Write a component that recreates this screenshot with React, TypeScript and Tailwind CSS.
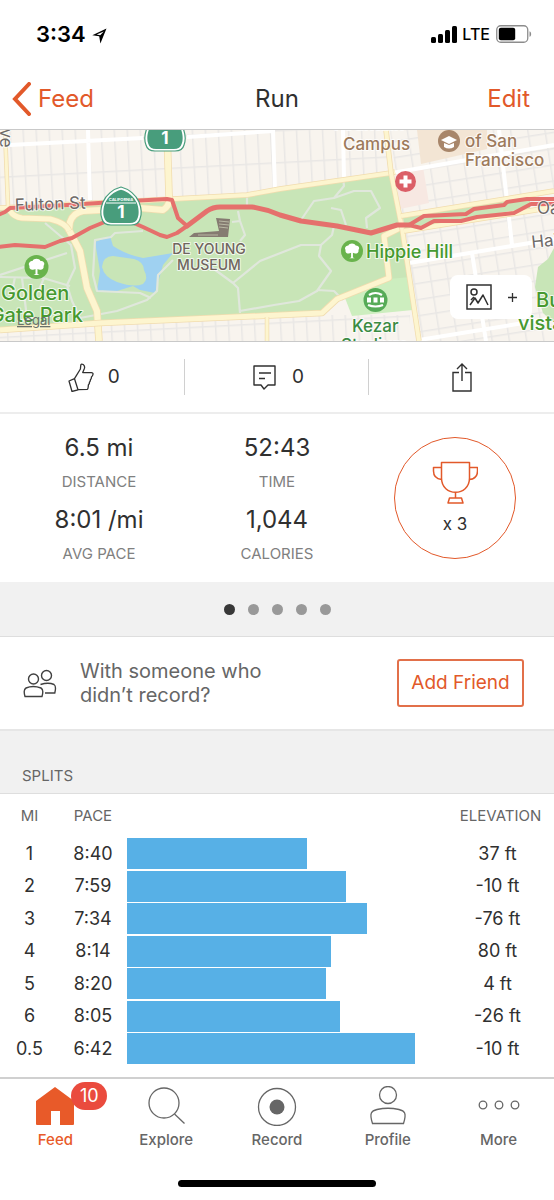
import type { ReactNode } from "react";

const STATS = [
  { value: "6.5 mi", label: "DISTANCE" },
  { value: "52:43", label: "TIME" },
  { value: "8:01 /mi", label: "AVG PACE" },
  { value: "1,044", label: "CALORIES" },
];

const SPLITS = [
  { mi: "1", pace: "8:40", elevation: "37 ft", bar: 62.5 },
  { mi: "2", pace: "7:59", elevation: "-10 ft", bar: 76 },
  { mi: "3", pace: "7:34", elevation: "-76 ft", bar: 83.5 },
  { mi: "4", pace: "8:14", elevation: "80 ft", bar: 70.8 },
  { mi: "5", pace: "8:20", elevation: "4 ft", bar: 69.2 },
  { mi: "6", pace: "8:05", elevation: "-26 ft", bar: 74 },
  { mi: "0.5", pace: "6:42", elevation: "-10 ft", bar: 100 },
];

function StatusBar() {
  return (
    <div className="flex h-[68px] items-center justify-between pl-9 pr-[22px] text-black">
      <div className="flex items-center gap-[6px]">
        <span className="text-[22px] font-semibold leading-7">3:34</span>
        <svg width="15" height="16" viewBox="0 0 15 16" className="mt-1" aria-hidden="true">
          <path d="M14.5.5 8.4 15.5 7.2 8.2.3 7.2Z" />
          <path d="M11.8 3.4 4.6 6.6l3.6.6Z" fill="white" />
        </svg>
      </div>
      <div className="flex items-center gap-[5px]">
        <svg width="26" height="17" viewBox="0 0 26 17" aria-hidden="true">
          <rect x="0" y="11" width="5" height="6" rx="1.5" />
          <rect x="7" y="8" width="5" height="9" rx="1.5" />
          <rect x="14" y="4" width="5" height="13" rx="1.5" />
          <rect x="21" y="0" width="5" height="17" rx="1.5" />
        </svg>
        <span className="text-[16px] font-medium leading-6">LTE</span>
        <svg width="36" height="18" viewBox="0 0 36 18" className="ml-px" aria-hidden="true">
          <rect x=".75" y=".75" width="31" height="16.5" rx="4" fill="none" stroke="#8c8c8c" strokeWidth="1.3" />
          <rect x="2.8" y="2.8" width="16.4" height="12.4" rx="2" />
          <path d="M33.5 6.2c2.2.8 2.2 4.8 0 5.6Z" fill="#8c8c8c" />
        </svg>
      </div>
    </div>
  );
}

function NavBar() {
  return (
    <header className="grid h-[62px] grid-cols-3 items-center border-b border-[#c9c9c9] pl-3 pr-6 text-[24px] leading-7">
      <a href="#feed" className="flex items-center gap-[7px] text-[#e2592a]">
        <svg width="19" height="34" viewBox="0 0 19 34" fill="none" stroke="currentColor" strokeWidth="4" aria-hidden="true">
          <path d="M17 2 3 17l14 15" strokeLinecap="round" />
        </svg>
        Feed
      </a>
      <h1 className="pl-3 text-center text-[#303030]">Run</h1>
      <button type="button" className="justify-self-end text-[#e2592a]">
        Edit
      </button>
    </header>
  );
}

function Road({ d, width = 5 }: { d: string; width?: number }) {
  return (
    <g fill="none" strokeLinejoin="round">
      <path d={d} stroke="#f1dcae" strokeWidth={width + 1.5} />
      <path d={d} stroke="#fdf5cf" strokeWidth={width} />
    </g>
  );
}

function Shield({ x, y }: { x: number; y: number }) {
  const d = "M0-22C8-20 15-14 18-7c2 5 3 12 1 17-1 4-4 6-9 6h-20c-5 0-8-2-9-6-2-5-1-12 1-17 3-7 10-13 18-15Z";
  return (
    <g transform={`translate(${x} ${y})`}>
      <path d={d} fill="#fff" stroke="#489d7c" strokeWidth="1.2" />
      <path d={d} transform="scale(.88)" fill="#489d7c" />
      <path d="M-15-6h30" stroke="#fff" strokeWidth="1" />
      <text y="-8" textAnchor="middle" fontSize="4" fontWeight="700" fill="#fff">
        CALIFORNIA
      </text>
      <text y="9" textAnchor="middle" fontSize="17" fontWeight="700" fill="#fff">
        1
      </text>
    </g>
  );
}

function TreePin({ x, y, r }: { x: number; y: number; r: number }) {
  return (
    <g transform={`translate(${x} ${y}) scale(${r / 12})`}>
      <circle r="12" fill="#69b34c" />
      <path
        d="M-1 7V2c-3 2-7 0-6-3-2-3 1-5 3-5 1-3 7-3 8 0 3 0 5 2 3 5 1 3-3 5-6 3v5l2 1h-6Z"
        fill="#fff"
      />
    </g>
  );
}

function RouteMap() {
  return (
    <div className="relative overflow-hidden border-b border-[#c9c9c9]">
      <svg viewBox="0 0 554 211" className="block w-full" role="img" aria-label="Route map through Golden Gate Park">
        <defs>
          <pattern id="avenues" width="13" height="32" patternUnits="userSpaceOnUse" patternTransform="translate(10 14) rotate(-3)">
            <path d="M0 0v32M0 0h13" stroke="#e9e7e5" strokeWidth="3" />
          </pattern>
          <pattern id="blocks" width="17" height="16" patternUnits="userSpaceOnUse" patternTransform="translate(406 106) rotate(-9)">
            <path d="M0 0v16M0 0h17" stroke="#e9e7e5" strokeWidth="3" />
          </pattern>
        </defs>

        <rect width="554" height="211" fill="#f8f4ee" />
        <path d="M0 0h390v50L170 70 0 80ZM0 200l330-15 80 0v26H0Z" fill="url(#avenues)" />
        <path d="M390 0h164v211H418Z" fill="url(#blocks)" />
        <path d="M417 0h70v19l-66 15Z" fill="#f3e5d4" />
        <path d="m395 42 28-5 6 36-29 6Z" fill="#f7e8e2" />

        {/* white streets */}
        <path
          fill="none"
          stroke="#fff"
          strokeWidth="4"
          d="M10 15 143 8M187 7 273 1M88 0l2 70M273 0l2 60M343 0l1 48M392 43 554 15M499 0l13 115M409 133l145-24M472 123l14 88M419 210l135-22"
        />

        {/* parks */}
        <path d="M0 77 173 69 247 64 280 59 391 43 402 98 411 148 389 150 337 171 322 184 280 186 100 194 0 202Z" fill="#c8e5b7" />
        <path d="M389 149 410 147 413 180 352 186 345 168Z" fill="#cdeebf" />
        <path d="M403 88 530 66v12L405 99Z" fill="#c8e5b7" />
        <path d="m554 118-6 11-10 8-3 20 8 26 11 10Z" fill="#c8e5b7" />

        {/* lake */}
        <path
          d="M95 112Q103 109 110 106L113 116Q127 125 143 128L173 123 163 135 155 163 140 160 133 156 117 161H97L100 141Z"
          fill="#9fd1f1"
        />
        <path d="M102 137Q103 126 113 126L134 129Q144 132 144 140 149 149 143 154 134 158 117 152 104 147 102 137Z" fill="#c8e5b7" />

        {/* foot paths */}
        <g fill="none" stroke="#e0e7dc" strokeWidth="2.2" strokeLinejoin="round">
          <path d="M143 101 115 103 111 107 95 110 93 145 97 161 140 163 151 168M173 130 158 145 157 161 147 170 117 181 80 188 72 171 67 155 75 138 71 115 45 93" />
          <path d="M0 145 67 123M0 147 43 148 70 156M15 147l-4 20M22 148l5 40M44 148l-6 14" />
          <path d="M203 131 233 153 238 158 240 183M233 153 260 131 301 115H321L319 126 331 141 317 161 299 171 274 175 240 181M321 115 332 105 334 96M317 160 334 161 343 170" />
          <path d="M301 90 314 71 334 68 344 56 343 48M334 68 354 61 371 61 380 78 366 88 367 98M331 78 341 80 346 95" />
          <path d="M247 66V78M238 81 240 91 245 105 240 111M232 92 240 91" />
        </g>

        <Road d="M0 78 173 69 247 65 280 59 391 43 395 42" width={4} />
        <Road d="M167 0 169 65Q171 75 163 80L140 78 83 81Q73 83 70 92L69 100 80 121 87 158 97 181 99 211" width={6} />
        <Road d="M10 81Q14 87 22 88L50 89Q66 93 69 101" width={5} />
        <Road d="M0 200 100 193 280 185 322 183 337 169 389 148 384 106 402 97" width={5} />
        <Road d="M5 0 8 76M267 187V211" width={3} />
        <Road d="M386 0 391 43 402 98 419 211" width={4} />
        <Road d="M401 86 554 61M404 101 554 77" width={4} />

        {/* recorded route */}
        <g fill="none" stroke="#e5706c" strokeLinejoin="round" strokeLinecap="round">
          <path
            strokeWidth="4"
            d="M-2 85 5 82 10 78 67 75 130 71 167 69 172 70 178 88 187 96M-2 117 15 115 45 117 60 111 72 108 90 98 107 91 127 90 143 97 160 105 167 107 177 103 187 96M409 95 424 86 466 84 474 79 504 75 507 72 527 69 556 69M409 95 421 98 434 91 461 91 477 87 514 83 531 74 556 74"
          />
          <path strokeWidth="5" d="M187 96 207 81Q213 77 220 77L252 77Q266 79 280 85L301 91 337 96 371 103 397 95 409 95" />
        </g>

        {/* museum */}
        <path d="M216 88 230 89 228 107H189L194 103 219 101Z" fill="#857b71" />
        <path d="M219 91 229 92M219 94 229 95M219 97 228 98M198 105h20" stroke="#b9b8a4" strokeWidth="1" />

        <Shield x={165} y={5} />
        <Shield x={121} y={79} />
        <TreePin x={36.5} y={137} r={12} />
        <TreePin x={352} y={121} r={11} />

        {/* stadium */}
        <circle cx="375.5" cy="170" r="12" fill="#56ab57" />
        <path d="M369 165q6.500-4 13 0M368 175q7.500 3 15 0" fill="none" stroke="#fff" strokeWidth="2.200" />
        <path d="M367 167.500h4v5h-4ZM373.500 167.500h4v5h-4ZM380 167.500h4v5h-4Z" fill="#fff" />

        {/* hospital */}
        <circle cx="405.5" cy="51.5" r="10.5" fill="#db5f67" />
        <path d="M405.5 45.5v12M399.5 51.5h12" stroke="#fff" strokeWidth="4" />

        {/* university */}
        <circle cx="449" cy="11" r="11" fill="#a8866a" />
        <path d="m441 10 8-4 8 4-8 4ZM444 13v4q5 3 10 0v-4l-5 2Z" fill="#fff" />

        <g fontWeight="500" stroke="#fff" strokeOpacity=".75" strokeWidth="2" paintOrder="stroke" strokeLinejoin="round">
          <g fill="#9d7a5c" fontSize="17">
            <text x="334" y="0">Fountain</text>
            <text x="343" y="20">Campus</text>
            <text x="465" y="17">of San</text>
            <text x="465" y="36">Francisco</text>
          </g>
          <g fill="#46992f">
            <text x="366" y="128" fontSize="18">Hippie Hill</text>
            <text x="536" y="177" fontSize="20">Buena</text>
            <text x="518" y="200" fontSize="20">vista</text>
            <text x="1" y="170" fontSize="20">Golden</text>
            <text x="83" y="192" fontSize="20" textAnchor="end">Gate Park</text>
          </g>
          <g fill="#3a8b43" fontSize="17">
            <text x="352" y="202">Kezar</text>
            <text x="341" y="221">Stadium</text>
          </g>
          <g fill="#6f665e" fontSize="14" textAnchor="middle">
            <text x="209" y="124">DE YOUNG</text>
            <text x="209" y="140">MUSEUM</text>
          </g>
          <g fill="#6e6a68" fontSize="17" fontWeight="400">
            <text x="15" y="81" transform="rotate(-2 15 81)">Fulton St</text>
            <text x="537" y="84">Oak</text>
            <text x="532" y="118" transform="rotate(-6 532 118)">Haight</text>
            <text transform="translate(0 -12) rotate(90)">Ave</text>
          </g>
        </g>
        <a href="#legal">
          <text x="17" y="195" fontSize="13" fill="#6a716a" textDecoration="underline">
            Legal
          </text>
        </a>
      </svg>

      <button
        type="button"
        aria-label="Add photo"
        className="absolute bottom-[22px] right-[22px] flex h-11 w-[82px] items-center justify-center gap-4 rounded-lg bg-white text-[#303030]"
      >
        <svg width="26" height="26" viewBox="0 0 26 26" fill="none" stroke="currentColor" strokeWidth="1.5" aria-hidden="true">
          <rect x="1" y="1" width="24" height="24" />
          <circle cx="8" cy="8" r="3" />
          <path d="m4 21 5-7 3 5 5-8 5 10M5 16l3-3" strokeLinejoin="round" />
        </svg>
        <svg width="9" height="9" viewBox="0 0 9 9" stroke="currentColor" strokeWidth="1.3" aria-hidden="true">
          <path d="M4.5 0v9M0 4.5h9" />
        </svg>
      </button>
    </div>
  );
}

function ActionBar() {
  return (
    <div className="grid h-[72px] grid-cols-3 items-center border-b-2 border-[#ededed] text-[19px] text-[#303030]">
      <button type="button" aria-label="Give kudos, 0" className="flex h-9 items-center justify-center gap-[14px] border-r border-[#d0d0d0] pl-1">
        <svg width="26" height="29" viewBox="0 0 26 29" fill="none" stroke="currentColor" strokeWidth="1.3" strokeLinejoin="round" aria-hidden="true">
          <path d="m1 18 5.5-2.3L10 26.800l-6 1.700ZM6.500 15.700 12.400 6l.4-4q.5-1.600 2.400-.5 2 1.400 1.200 4l-1.700 4 8.600.1q2 .2 1.700 1.700-.2 1.800-1.600 2.700.2 1.700-1 2.700.1 1.700-1 2.600.3 1.600-1 2.400-.2 4-1 4.600L10 26.600" />
        </svg>
        0
      </button>
      <button type="button" aria-label="Comments, 0" className="flex h-9 items-center justify-center gap-4 border-r border-[#d0d0d0] pl-1">
        <svg width="23" height="25" viewBox="0 0 23 25" fill="none" stroke="currentColor" strokeWidth="1.4" strokeLinejoin="round" aria-hidden="true">
          <path d="M1 1h21v19h-7l-4 4-3-4H1ZM6 8h12M6 13.5h6" />
        </svg>
        0
      </button>
      <button type="button" aria-label="Share" className="flex h-9 items-center justify-center">
        <svg width="20" height="29" viewBox="0 0 20 29" fill="none" stroke="currentColor" strokeWidth="1.4" aria-hidden="true">
          <path d="M7 9.5H1V28h18V9.5h-6M10 18V1M5 6l5-5 5 5" />
        </svg>
      </button>
    </div>
  );
}

function Stats() {
  return (
    <section className="flex h-[168px] items-center px-[10px]">
      <dl className="grid w-2/3 grid-cols-2 gap-y-3 pt-1 text-center">
        {STATS.map((stat) => (
          <div key={stat.label} className="flex flex-col-reverse gap-2">
            <dt className="text-[15px] leading-6 text-[#808080]">{stat.label}</dt>
            <dd className="text-[24px] leading-7 text-[#303030]">{stat.value}</dd>
          </div>
        ))}
      </dl>
      <div className="flex w-1/3 justify-center">
        <button
          type="button"
          aria-label="3 achievements"
          className="flex size-[122px] flex-col items-center justify-center gap-2 rounded-full border border-[#e2592a]"
        >
          <svg width="46" height="43" viewBox="-1 -1 46 43" fill="none" stroke="#e2592a" strokeWidth="1.5" strokeLinejoin="round" aria-hidden="true">
            <path d="M8.500.5h28V16c0 19-28 19-28 0ZM8.500 5.500h-8V9c0 5 3 8 8 8.500M36.500 5.500h8V9c0 5-3 8-8 8.500M22.500 30.500V36M16.500 36h12l1.500 5H15Z" />
          </svg>
          <span className="text-[17px] leading-6 text-[#303030]">x 3</span>
        </button>
      </div>
    </section>
  );
}

function Pager() {
  return (
    <div className="flex h-[55px] items-center justify-center gap-[13px] border-b border-[#dedede] bg-[#f1f1f1]">
      <span className="size-[11px] rounded-full bg-[#383838]" />
      <span className="size-[11px] rounded-full bg-[#999]" />
      <span className="size-[11px] rounded-full bg-[#999]" />
      <span className="size-[11px] rounded-full bg-[#999]" />
      <span className="size-[11px] rounded-full bg-[#999]" />
    </div>
  );
}

function AddFriend() {
  return (
    <section className="flex h-[94px] items-center border-b-2 border-[#e6e6e6] pl-[23px] pr-[30px]">
      <svg width="34" height="29" viewBox="0 0 34 29" fill="none" stroke="#404040" strokeWidth="1.4" strokeLinejoin="round" aria-hidden="true">
        <circle cx="10.500" cy="10" r="5" />
        <circle cx="23.500" cy="6.500" r="5" />
        <path d="M2 27.500q-2-7 1-8.500 7-3 15 0 3 1.500 1 8.500ZM17.500 15.500q8-2.500 13.500 0 2.500 1.500.8 8.500H22" />
      </svg>
      <p className="ml-[23px] text-[20px] leading-6 text-[#666]">
        With someone who
        <br />
        didn’t record?
      </p>
      <button type="button" className="ml-auto h-12 w-[127px] rounded-[3px] border-2 border-[#e2704a] text-[19px] text-[#e2592a]">
        Add Friend
      </button>
    </section>
  );
}

function Splits() {
  return (
    <section>
      <h2 className="flex h-[63px] items-end border-b border-[#dedede] bg-[#f1f1f1] px-[22px] pb-[7px] text-[15px] leading-5 text-[#666]">
        SPLITS
      </h2>
      <table className="mb-3 w-full table-fixed text-center text-[18px] leading-6 text-[#303030]">
        <thead>
          <tr className="h-[43px] text-[15px] text-[#666]">
            <th className="w-[59px] font-normal">MI</th>
            <th className="w-[68px] font-normal">PACE</th>
            <th aria-label="Pace chart" />
            <th className="w-[139px] pl-8 font-normal">ELEVATION</th>
          </tr>
        </thead>
        <tbody>
          {SPLITS.map((split) => (
            <tr key={split.mi} className="odd:h-[33px] even:h-8">
              <td>{split.mi}</td>
              <td>{split.pace}</td>
              <td>
                <div className="h-[31px] bg-[#57b0e6]" style={{ width: `${split.bar}%` }} />
              </td>
              <td className="pl-[26px]">{split.elevation}</td>
            </tr>
          ))}
        </tbody>
      </table>
    </section>
  );
}

function Tab({ label, active, badge, children }: { label: string; active?: boolean; badge?: string; children: ReactNode }) {
  return (
    <a
      href={`#${label.toLowerCase()}`}
      className={`flex flex-col items-center gap-1 text-[15px] font-medium leading-5 ${active ? "text-[#e85a29]" : "text-[#666]"}`}
    >
      <span className="relative">
        <svg width="42" height="40" viewBox="-1 0 42 40" fill="none" stroke="currentColor" strokeWidth="1.3" aria-hidden="true">
          {children}
        </svg>
        {badge && (
          <span className="absolute -top-1 left-[37px] flex h-7 w-9 items-center justify-center rounded-full bg-[#ea4b3e] text-[18px] font-normal text-white">
            {badge}
          </span>
        )}
      </span>
      {label}
    </a>
  );
}

function TabBar() {
  return (
    <nav className="grid grid-cols-5 border-t-2 border-[#d0d0d0] pt-[7px]">
      <Tab label="Feed" active badge="10">
        <path d="M20 1 39 15v23q0 1-1 1H25V25h-9v14H2q-1 0-1-1V15Z" fill="currentColor" stroke="none" />
      </Tab>
      <Tab label="Explore">
        <circle cx="18" cy="17" r="15" />
        <path d="m28.500 28 10 9.500" />
      </Tab>
      <Tab label="Record">
        <circle cx="20" cy="21" r="18.500" />
        <circle cx="20" cy="21" r="7.500" fill="currentColor" stroke="none" />
      </Tab>
      <Tab label="Profile">
        <circle cx="20" cy="9" r="8.500" />
        <path d="M4.500 37.500c-3.500-11-1-12.500 4.500-14q11-2.500 22 0c5.500 1.500 8 3 4.500 14Z" />
      </Tab>
      <Tab label="More">
        <circle cx="4" cy="19" r="3.800" />
        <circle cx="20" cy="19" r="3.800" />
        <circle cx="36" cy="19" r="3.800" />
      </Tab>
    </nav>
  );
}

export default function App() {
  return (
    <div className="min-h-screen bg-white font-['Inter','Liberation_Sans',sans-serif]">
      <StatusBar />
      <NavBar />
      <main>
        <RouteMap />
        <ActionBar />
        <Stats />
        <Pager />
        <AddFriend />
        <Splits />
      </main>
      <TabBar />
      <div className="flex justify-center pb-3 pt-[30px]">
        <div className="h-[7px] w-[198px] rounded-full bg-black" />
      </div>
    </div>
  );
}
